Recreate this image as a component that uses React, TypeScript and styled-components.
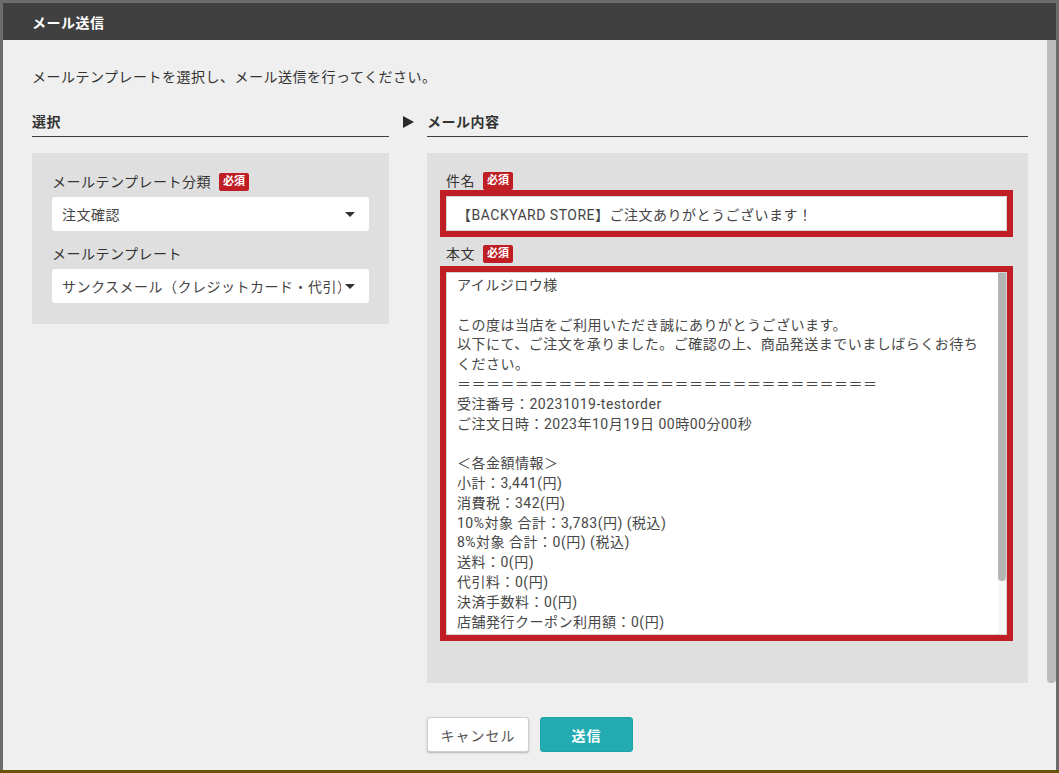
import React, { ReactElement } from 'react';
import styled, { createGlobalStyle } from 'styled-components';

const GlobalStyle = createGlobalStyle`
  html, body {
    margin: 0;
    height: 100%;
  }

  body {
    overflow: hidden;
    background: linear-gradient(to bottom, #6c6c6c calc(100% - 3px), #6b5300 calc(100% - 3px));
    font-family: Roboto, "Noto Sans CJK JP", sans-serif;
    color: #333;
  }
`;

const RED = '#bf1e24';

const Overlay = styled.div`
  height: 100vh;
  padding: 3px;
  box-sizing: border-box;
  display: flex;
`;

const Dialog = styled.section`
  flex: 1;
  display: flex;
  flex-direction: column;
  background: #efefef;
  overflow: hidden;
`;

const DialogHeader = styled.header`
  height: 37px;
  flex: none;
  display: flex;
  align-items: center;
  padding-left: 29px;
  background: #404040;
  color: #fff;
  font-size: 14px;
  font-weight: bold;
  letter-spacing: 0.5px;
`;

const DialogMain = styled.div`
  flex: 1;
  min-height: 0;
  display: flex;
`;

const DialogBody = styled.div`
  flex: 1;
  min-width: 0;
  overflow: hidden;
  padding: 27px 19px 117px 29px;
  font-size: 14px;
  letter-spacing: 0.5px;
`;

const ScrollTrack = styled.div<{ $width: number; $track: string }>`
  flex: none;
  width: ${({ $width }) => $width}px;
  background: ${({ $track }) => $track};
`;

const ScrollThumb = styled.div<{ $length: number; $color: string }>`
  height: ${({ $length }) => $length}px;
  background: ${({ $color }) => $color};
  border-radius: 0 0 4px 4px;
`;

const Intro = styled.p`
  margin: 0 0 25px;
  line-height: 20px;
`;

const Columns = styled.div`
  display: grid;
  grid-template-columns: 357px 38px 1fr;
  align-items: start;
`;

const SectionTitle = styled.h3`
  margin: 0 0 16px;
  padding-bottom: 4px;
  border-bottom: 1px solid #3c3c3c;
  font-size: 14px;
  line-height: 20px;
  font-weight: bold;
`;

const Arrow = styled.span`
  width: 0;
  height: 0;
  margin: 4px 0 0 14px;
  border-left: 11px solid #2b2b2b;
  border-top: 6px solid transparent;
  border-bottom: 6px solid transparent;
`;

const LeftColumn = styled.div`
  grid-column: 1;
`;

const RightColumn = styled.div`
  grid-column: 3;
`;

const Panel = styled.div<{ $padding: string }>`
  background: #dfdfdf;
  padding: ${({ $padding }) => $padding};
`;

const Field = styled.div<{ $gap: number }>`
  & + & {
    margin-top: ${({ $gap }) => $gap}px;
  }
`;

const Label = styled.div<{ $space: number }>`
  display: flex;
  align-items: center;
  gap: 8px;
  line-height: 18px;
  margin-bottom: ${({ $space }) => $space}px;
`;

const Required = styled.span`
  display: inline-block;
  width: 30px;
  height: 18px;
  line-height: 18px;
  text-align: center;
  background: ${RED};
  color: #fff;
  font-size: 11px;
  font-weight: bold;
  letter-spacing: 0;
  border-radius: 2px;
`;

const Select = styled.div`
  height: 34px;
  display: flex;
  align-items: center;
  padding: 0 14px 0 10px;
  background: #fff;
  border-radius: 3px;
  color: #444;
`;

const SelectValue = styled.span`
  flex: 1;
  overflow: hidden;
  white-space: nowrap;
`;

const Caret = styled.span`
  flex: none;
  width: 0;
  height: 0;
  margin-left: 4px;
  border-top: 5px solid #333;
  border-left: 5px solid transparent;
  border-right: 5px solid transparent;
`;

const SubjectInput = styled.input`
  display: block;
  width: 100%;
  height: 35px;
  box-sizing: border-box;
  padding: 0 10px;
  border: 1px solid #d4d4d4;
  outline: 6px solid ${RED};
  background: #fff;
  font: inherit;
  letter-spacing: 0.5px;
  color: #444;
`;

const TextBox = styled.div`
  display: flex;
  height: 363px;
  box-sizing: border-box;
  border: 1px solid #d4d4d4;
  outline: 6px solid ${RED};
  background: #fff;
`;

const BodyText = styled.textarea`
  flex: 1;
  min-width: 0;
  padding: 3px 10px 8px;
  border: 0;
  outline: none;
  background: transparent;
  resize: none;
  font: inherit;
  letter-spacing: 0.5px;
  line-height: 19.8px;
  color: #474747;
  overflow: hidden;
`;

const Actions = styled.div`
  display: flex;
  gap: 11px;
  margin-top: 34px;
`;

const Button = styled.button<{ $primary?: boolean }>`
  height: 35px;
  width: ${({ $primary }) => ($primary ? 93 : 102)}px;
  border-radius: 3px;
  font-family: inherit;
  font-size: 14px;
  letter-spacing: 1px;
  cursor: pointer;
  border: 1px solid ${({ $primary }) => ($primary ? '#1fa2a8' : '#cfcfcf')};
  background: ${({ $primary }) => ($primary ? '#22abb0' : '#fff')};
  color: ${({ $primary }) => ($primary ? '#fff' : '#555')};
  font-weight: ${({ $primary }) => ($primary ? 'bold' : 'normal')};
  box-shadow: ${({ $primary }) => ($primary ? 'none' : '0 1px 2px rgba(0, 0, 0, 0.25)')};
`;

const mailBody = [
  'アイルジロウ様',
  '',
  'この度は当店をご利用いただき誠にありがとうございます。',
  '以下にて、ご注文を承りました。ご確認の上、商品発送までいましばらくお待ち',
  'ください。',
  '＝＝＝＝＝＝＝＝＝＝＝＝＝＝＝＝＝＝＝＝＝＝＝＝＝＝＝＝＝',
  '受注番号：20231019-testorder',
  'ご注文日時：2023年10月19日 00時00分00秒',
  '',
  '＜各金額情報＞',
  '小計：3,441(円)',
  '消費税：342(円)',
  '10%対象 合計：3,783(円) (税込)',
  '8%対象 合計：0(円) (税込)',
  '送料：0(円)',
  '代引料：0(円)',
  '決済手数料：0(円)',
  '店舗発行クーポン利用額：0(円)',
  'ポイント利用額：0(円)',
  '合計金額：3,783(円)',
  '',
].join('\n');

export default function App(): ReactElement {
  return (
    <>
      <GlobalStyle />
      <Overlay>
        <Dialog>
          <DialogHeader>メール送信</DialogHeader>
          <DialogMain>
            <DialogBody>
              <Intro>メールテンプレートを選択し、メール送信を行ってください。</Intro>
              <Columns>
                <LeftColumn>
                  <SectionTitle>選択</SectionTitle>
                  <Panel $padding="20px 20px 21px">
                    <Field $gap={15}>
                      <Label $space={6}>
                        メールテンプレート分類<Required>必須</Required>
                      </Label>
                      <Select>
                        <SelectValue>注文確認</SelectValue>
                        <Caret />
                      </Select>
                    </Field>
                    <Field $gap={15}>
                      <Label $space={6}>メールテンプレート</Label>
                      <Select>
                        <SelectValue>サンクスメール（クレジットカード・代引）</SelectValue>
                        <Caret />
                      </Select>
                    </Field>
                  </Panel>
                </LeftColumn>
                <Arrow />
                <RightColumn>
                  <SectionTitle>メール内容</SectionTitle>
                  <Panel $padding="19px 21px 48px 19px">
                    <Field $gap={14}>
                      <Label $space={6}>
                        件名<Required>必須</Required>
                      </Label>
                      <SubjectInput readOnly value="【BACKYARD STORE】ご注文ありがとうございます！" />
                    </Field>
                    <Field $gap={14}>
                      <Label $space={9}>
                        本文<Required>必須</Required>
                      </Label>
                      <TextBox>
                        <BodyText readOnly value={mailBody} />
                        <ScrollTrack $width={8} $track="#f7f7f7">
                          <ScrollThumb $length={308} $color="#b4b4b4" />
                        </ScrollTrack>
                      </TextBox>
                    </Field>
                  </Panel>
                  <Actions>
                    <Button>キャンセル</Button>
                    <Button $primary>送信</Button>
                  </Actions>
                </RightColumn>
              </Columns>
            </DialogBody>
            <ScrollTrack $width={9} $track="#efefef">
              <ScrollThumb $length={643} $color="#bcbcbc" />
            </ScrollTrack>
          </DialogMain>
        </Dialog>
      </Overlay>
    </>
  );
}
